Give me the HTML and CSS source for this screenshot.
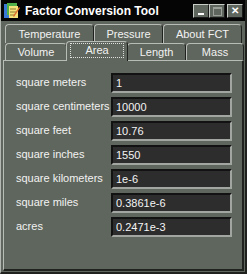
FILE: index.html
```html
<!DOCTYPE html>
<html lang="en">
<head>
    <meta charset="UTF-8">
    <title>Factor Conversion Tool</title>
    <link rel="stylesheet" href="styles.css">
</head>
<body>
    <div class="window">
        <div class="titlebar">
            <svg class="app-icon" width="16" height="16" viewBox="0 0 16 16">
                <rect x="0" y="1" width="11" height="14" fill="#3a78d8"/>
                <rect x="3" y="0" width="10" height="12" fill="#4fb04a"/>
                <rect x="5" y="3" width="9" height="12" fill="#f4e27a"/>
                <line x1="6" y1="6" x2="12" y2="6" stroke="#8a7a30"/>
                <line x1="6" y1="9" x2="12" y2="9" stroke="#8a7a30"/>
                <line x1="6" y1="12" x2="11" y2="12" stroke="#8a7a30"/>
                <path d="M9 13 L15 4 L16 5 L10 14 Z" fill="#e07030"/>
            </svg>
            <span class="title">Factor Conversion Tool</span>
            <div class="controls">
                <span class="ctl"><i class="min"></i></span>
                <span class="ctl"><i class="max"></i></span>
                <span class="ctl close">&#x2715;</span>
            </div>
        </div>

        <div class="tabs">
            <div class="tabrow back">
                <span class="tab w-temp">Temperature</span>
                <span class="tab w-press">Pressure</span>
                <span class="tab w-about">About FCT</span>
            </div>
            <div class="tabrow front">
                <span class="tab w-vol">Volume</span>
                <span class="tab w-area active"><em>Area</em></span>
                <span class="tab w-len">Length</span>
                <span class="tab w-mass">Mass</span>
            </div>
        </div>

        <div class="panel">
            <div class="row"><label>square meters</label><input type="text" value="1"></div>
            <div class="row"><label>square centimeters</label><input type="text" value="10000"></div>
            <div class="row"><label>square feet</label><input type="text" value="10.76"></div>
            <div class="row"><label>square inches</label><input type="text" value="1550"></div>
            <div class="row"><label>square kilometers</label><input type="text" value="1e-6"></div>
            <div class="row"><label>square miles</label><input type="text" value="0.3861e-6"></div>
            <div class="row"><label>acres</label><input type="text" value="0.2471e-3"></div>
        </div>
    </div>
</body>
</html>
```

FILE: styles.css
```css
body {
    margin: 0;
    padding: 0;
    background: #5f665d;
    font-family: "Liberation Sans", Arial, sans-serif;
    font-size: 11px;
    color: #f2f2f2;
}
.window {
    width: 247px;
    height: 274px;
    box-sizing: border-box;
    background: #5f665d;
    border-left: 1px solid #b4b8b2;
    border-right: 2px solid #1e211d;
    border-bottom: 2px solid #1e211d;
    display: flex;
    flex-direction: column;
}
.titlebar {
    height: 21px;
    background: #050505;
    display: flex;
    align-items: center;
    padding-left: 3px;
}
.app-icon {
    margin-right: 5px;
}
.title {
    font-weight: bold;
    font-size: 12px;
    color: #ffffff;
}
.controls {
    margin-left: auto;
    display: flex;
    padding-right: 2px;
}
.ctl {
    width: 14px;
    height: 12px;
    background: #5f665d;
    border-top: 1px solid #c8ccc6;
    border-left: 1px solid #c8ccc6;
    border-right: 1px solid #1a1a1a;
    border-bottom: 1px solid #1a1a1a;
    position: relative;
    color: #ffffff;
    font-size: 10px;
    font-weight: bold;
    line-height: 12px;
    text-align: center;
}
.ctl.close {
    margin-left: 2px;
}
.ctl .min {
    position: absolute;
    left: 4px;
    bottom: 2px;
    width: 6px;
    height: 2px;
    background: #ffffff;
}
.ctl .max {
    position: absolute;
    left: 3px;
    top: 2px;
    width: 7px;
    height: 6px;
    border: 1px solid #9aa097;
    border-top-width: 2px;
}

.tabs {
    padding: 3px 0 0 4px;
}
.tabrow {
    display: flex;
    height: 19px;
}
.tabrow.front {
    height: 17px;
}
.tab {
    box-sizing: border-box;
    height: 19px;
    border-top: 1px solid #b8bcb6;
    border-left: 1px solid #b8bcb6;
    border-right: 1px solid #1f221e;
    border-radius: 4px 4px 0 0;
    text-align: center;
    line-height: 18px;
    color: #f2f2f2;
}
.front .tab {
    height: 17px;
    line-height: 16px;
}
.w-temp { width: 89px; }
.w-press { width: 69px; }
.w-about { width: 79px; }
.w-vol { width: 62px; }
.w-area { width: 60px; }
.w-len { width: 59px; }
.w-mass { width: 58px; }
.front .tab.active {
    height: 20px;
    margin-top: -2px;
    margin-left: -1px;
    margin-right: -1px;
    width: 62px;
    background: #5f665d;
    border-bottom: 0;
    position: relative;
    z-index: 1;
}
.tab.active em {
    font-style: normal;
    display: block;
    margin: 1px 3px 0;
    line-height: 13px;
    border: 1px dotted #e0e0e0;
}

.panel {
    flex: 1;
    margin: 0 1px 1px 2px;
    border-top: 1px solid #b8bcb6;
    border-left: 1px solid #b8bcb6;
    border-right: 2px solid #1f221e;
    border-bottom: 2px solid #1f221e;
    padding: 12px 10px 0 12px;
    display: flex;
    flex-direction: column;
    gap: 4px;
}
.row {
    display: flex;
    align-items: center;
    height: 20px;
}
.row label {
    width: 95px;
    margin-bottom: 3px;
}
.row input {
    box-sizing: border-box;
    width: 121px;
    height: 20px;
    margin: 0;
    padding: 0 0 0 3px;
    background: #2d2d2d;
    color: #f4f4f4;
    font-family: "Liberation Sans", Arial, sans-serif;
    font-size: 11px;
    border-top: 2px solid #121212;
    border-left: 2px solid #121212;
    border-right: 2px solid #a2a6a0;
    border-bottom: 2px solid #a2a6a0;
    outline: none;
}
```
